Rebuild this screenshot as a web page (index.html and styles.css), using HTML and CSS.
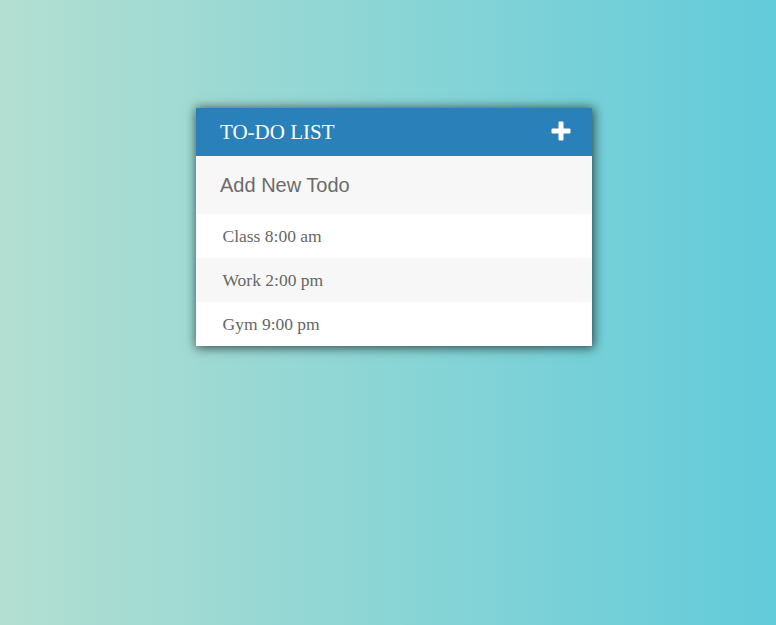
FILE: index.html
```html
<!DOCTYPE html>
<html>
<head>
<meta charset="utf-8">
<link rel="stylesheet" href="styles.css">
</head>
<body>
<div class="card">
  <div class="header">
    <span class="title">TO-DO LIST</span>
    <svg class="plus" width="20" height="20" viewBox="0 0 20 20"><path d="M7.5 1.5a1 1 0 0 1 1-1h3a1 1 0 0 1 1 1V7.5h6a1 1 0 0 1 1 1v3a1 1 0 0 1-1 1h-6v6a1 1 0 0 1-1 1h-3a1 1 0 0 1-1-1v-6h-6a1 1 0 0 1-1-1v-3a1 1 0 0 1 1-1h6z" fill="#fff"/></svg>
  </div>
  <div class="new">Add New Todo</div>
  <ul class="list">
    <li class="item">Class 8:00 am</li>
    <li class="item alt">Work 2:00 pm</li>
    <li class="item">Gym 9:00 pm</li>
  </ul>
</div>
</body>
</html>
```
FILE: styles.css
```css
html, body {
  margin: 0;
  height: 100%;
}
body {
  background: linear-gradient(to right, #b3dfd1, #62cbda);
  padding-top: 108px;
  box-sizing: border-box;
}
.card {
  width: 396px;
  margin-left: 196px;
  background: #fff;
  box-shadow: 1px 1px 10px 1px rgba(0, 0, 0, 0.65);
}
.header {
  height: 48px;
  background: #2a80b9;
  display: flex;
  align-items: center;
  justify-content: space-between;
  padding: 0 21px 0 24px;
}
.title {
  font-family: "Liberation Serif", serif;
  font-size: 21px;
  color: #fff;
  padding-top: 1px;
}
.plus {
  display: block;
  margin-top: -2px;
}
.new {
  height: 58px;
  background: #f7f7f7;
  display: flex;
  align-items: center;
  padding-left: 24px;
  font-family: "Liberation Sans", sans-serif;
  font-size: 20px;
  color: #6b6b6b;
}
.list {
  list-style: none;
  margin: 0;
  padding: 0;
}
.item {
  height: 44px;
  display: flex;
  align-items: center;
  padding-left: 26.5px;
  font-family: "Liberation Serif", serif;
  font-size: 17.5px;
  color: #666;
  background: #fff;
}
.item.alt {
  background: #f7f7f7;
}
```
